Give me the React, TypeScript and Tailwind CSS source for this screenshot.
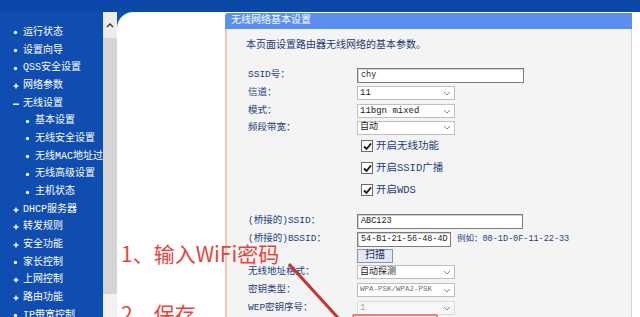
import React from "react";

const FONT = "font-['Liberation_Mono','Noto_Sans_CJK_SC',monospace]";

type NavItem = { t: string; lv: number; b?: "dot" | "plus" | "minus" };

const NAV: NavItem[] = [
  { t: "运行状态", lv: 0, b: "dot" },
  { t: "设置向导", lv: 0, b: "dot" },
  { t: "QSS安全设置", lv: 0, b: "dot" },
  { t: "网络参数", lv: 0, b: "plus" },
  { t: "无线设置", lv: 0, b: "minus" },
  { t: "基本设置", lv: 1 },
  { t: "无线安全设置", lv: 1 },
  { t: "无线MAC地址过滤", lv: 1 },
  { t: "无线高级设置", lv: 1 },
  { t: "主机状态", lv: 1 },
  { t: "DHCP服务器", lv: 0, b: "plus" },
  { t: "转发规则", lv: 0, b: "plus" },
  { t: "安全功能", lv: 0, b: "plus" },
  { t: "家长控制", lv: 0, b: "dot" },
  { t: "上网控制", lv: 0, b: "plus" },
  { t: "路由功能", lv: 0, b: "plus" },
  { t: "IP带宽控制", lv: 0, b: "dot" },
];

function Bullet({ kind }: { kind?: "dot" | "plus" | "minus" }) {
  if (kind === "minus")
    return (
      <svg width="6" height="6" viewBox="0 0 6 6">
        <rect x="0" y="2.5" width="6" height="1.4" fill="#ffffff" />
      </svg>
    );
  if (kind === "plus")
    return (
      <svg width="6" height="6" viewBox="0 0 6 6">
        <rect x="0.5" y="2.3" width="5" height="1.4" fill="#ffffff" />
        <rect x="2.3" y="0.5" width="1.4" height="5" fill="#ffffff" />
      </svg>
    );
  return (
    <svg width="5" height="5" viewBox="0 0 5 5">
      <circle cx="2.5" cy="2.5" r="1.7" fill="#e8f0ff" />
    </svg>
  );
}

function Chevron() {
  return (
    <svg width="8" height="5" viewBox="0 0 8 5">
      <path d="M1 1 L4 4 L7 1" fill="none" stroke="#8c8c8c" strokeWidth="1" />
    </svg>
  );
}

function Select({
  value,
  disabled = false,
  small = false,
}: {
  value: string;
  disabled?: boolean;
  small?: boolean;
}) {
  return (
    <div
      className={`w-[98px] h-[14px] border flex items-center justify-between pl-[2px] pr-[3px] ${
        disabled ? "border-[#dadada] bg-[#f7f7f7]" : "border-[#bfbfbf] bg-white"
      }`}
    >
      <span
        className={`leading-none whitespace-nowrap ${
          small ? "text-[7.5px] text-[#707070]" : "text-[9px]"
        } ${disabled ? "text-[#a8a8a8]" : small ? "" : "text-[#1a1a1a]"}`}
      >
        {value}
      </span>
      <Chevron />
    </div>
  );
}

function Input({ value, w }: { value: string; w: number }) {
  return (
    <div
      className="h-[15px] border border-[#7c7c7c] bg-white flex items-center pl-[3px] shadow-[inset_1px_1px_0_#d0d0d0]"
      style={{ width: w }}
    >
      <span className="text-[8.5px] leading-none text-[#1a1a1a] whitespace-nowrap">{value}</span>
    </div>
  );
}

function Check() {
  return (
    <div className="w-[12px] h-[12px] border border-[#6a6a6a] bg-white flex items-center justify-center">
      <svg width="9" height="9" viewBox="0 0 9 9">
        <path d="M1 4.5 L3.5 7 L8 1.5" fill="none" stroke="#111" strokeWidth="1.8" />
      </svg>
    </div>
  );
}

function Row({
  label,
  h,
  children,
}: {
  label: string;
  h: number;
  children?: React.ReactNode;
}) {
  return (
    <div className="flex items-center" style={{ height: h }}>
      <div className="w-[109px] shrink-0 text-[9.5px] leading-none text-[#223f7d] whitespace-nowrap">{label}</div>
      <div className="flex items-center">{children}</div>
    </div>
  );
}

function CheckRow({ label }: { label: string }) {
  return (
    <div className="flex items-center h-[22px]">
      <div className="w-[109px] shrink-0" />
      <div className="ml-[4px] flex items-center gap-[3px]">
        <Check />
        <span className="text-[10.5px] leading-none text-[#223f7d] whitespace-nowrap">{label}</span>
      </div>
    </div>
  );
}

export default function App() {
  return (
    <div className={`relative w-[640px] h-[317px] overflow-hidden bg-[#0f4db0] ${FONT}`}>
      {/* top bar */}
      <div className="h-[12px] bg-[#0b48a8]" />
      <div className="flex h-[305px]">
        {/* sidebar */}
        <div className="w-[103px] shrink-0 bg-[#0f4db0] overflow-hidden pt-[12px]">
          {NAV.map((n) => (
            <div
              key={n.t}
              className="h-[17.7px] flex items-center whitespace-nowrap"
              style={{ paddingLeft: n.lv === 0 ? 13 : 25 }}
            >
              <div className="w-[10px] shrink-0 flex items-center">
                <Bullet kind={n.lv === 1 ? "dot" : n.b} />
              </div>
              <span className="shrink-0 text-[10px] leading-none text-white">{n.t}</span>
            </div>
          ))}
        </div>
        {/* scrollbar */}
        <div className="w-[14px] shrink-0 bg-[#d5d5d5] flex flex-col">
          <div className="h-[26px] bg-[#ececec] flex items-center justify-center">
            <svg width="8" height="5" viewBox="0 0 8 5">
              <path d="M1 4 L4 1 L7 4" fill="none" stroke="#333" strokeWidth="1.4" />
            </svg>
          </div>
          <div className="flex-1" />
          <div className="h-[23px] bg-[#f2f2f2]" />
        </div>
        {/* content */}
        <div className="flex-1 bg-[#0f4db0]">
          <div className="h-full bg-white rounded-tl-[16px] flex">
            <div className="w-[108px] shrink-0" />
            <div className="w-[407px] shrink-0 flex flex-col pt-[1px]">
              <div className="h-[18px] bg-[#5b8ef1] flex items-center pl-[6px] rounded-tl-[3px]">
                <span className="text-[10px] leading-none text-white">无线网络基本设置</span>
              </div>
              <div className="flex-1 bg-[#f4f4f4] border-l-2 border-[#f3c6b4] border-r border-r-[#e6d1b6] pt-[11px]">
                <div className="pl-[19px] h-[12px] flex items-center">
                  <span className="text-[10px] leading-none text-[#1e3873]">本页面设置路由器无线网络的基本参数。</span>
                </div>
                <div className="pl-[21px] pt-[14px]">
                  <Row label="SSID号：" h={18}>
                    <Input value="chy" w={167} />
                  </Row>
                  <Row label="信道：" h={18}>
                    <Select value="11" />
                  </Row>
                  <Row label="模式：" h={18}>
                    <Select value="11bgn mixed" />
                  </Row>
                  <Row label="频段带宽：" h={15}>
                    <Select value="自动" />
                  </Row>
                  <CheckRow label="开启无线功能" />
                  <CheckRow label="开启SSID广播" />
                  <CheckRow label="开启WDS" />
                  <div className="h-[11px]" />
                  <Row label="(桥接的)SSID：" h={18}>
                    <Input value="ABC123" w={166} />
                  </Row>
                  <Row label="(桥接的)BSSID：" h={18}>
                    <Input value="54-B1-21-56-48-4D" w={94} />
                    <span className="ml-[6px] text-[8.5px] leading-none text-[#223f7d] whitespace-nowrap">
                      例如：00-1D-0F-11-22-33
                    </span>
                  </Row>
                  <Row label="" h={15}>
                    <div className="w-[36px] h-[14px] border border-[#8a94b0] bg-[#e4e8f3] flex items-center justify-center">
                      <span className="text-[10px] leading-none text-[#1e2f5a]">扫描</span>
                    </div>
                  </Row>
                  <Row label="无线地址格式：" h={18}>
                    <Select value="自动探测" />
                  </Row>
                  <Row label="密钥类型：" h={18}>
                    <Select value="WPA-PSK/WPA2-PSK" small />
                  </Row>
                  <Row label="WEP密钥序号：" h={18}>
                    <Select value="1" disabled />
                  </Row>
                </div>
              </div>
            </div>
            <div className="flex-1" />
          </div>
        </div>
      </div>

      {/* annotations */}
      <div className="absolute left-[121px] top-[243px] text-[21px] leading-none text-[#e5443e] whitespace-nowrap font-['Noto_Sans_CJK_SC',sans-serif]">
        1、输入WiFi密码
      </div>
      <div className="absolute left-[121px] top-[303px] text-[21px] leading-none text-[#e5443e] whitespace-nowrap font-['Noto_Sans_CJK_SC',sans-serif]">
        2、保存
      </div>
      <svg className="absolute left-0 top-0" width="640" height="317" viewBox="0 0 640 317">
        <line x1="289" y1="264" x2="340" y2="320" stroke="#c8322b" strokeWidth="3" />
      </svg>
      <div className="absolute left-[352px] top-[314px] w-[86px] h-[20px] border-2 border-[#f07a78] rounded-[2px]" />
    </div>
  );
}
